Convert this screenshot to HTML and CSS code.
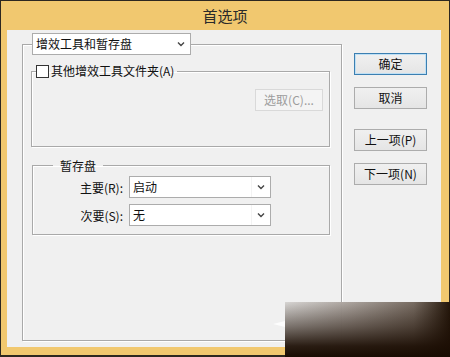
FILE: index.html
```html
<!DOCTYPE html>
<html lang="zh-CN">
<head>
    <meta charset="UTF-8">
    <title>首选项</title>
    <link rel="stylesheet" href="styles.css">
</head>
<body>
    <div class="window">
        <div class="titlebar">首选项</div>
        <div class="client">
            <fieldset class="group main-group">
                <legend class="combo combo-main">
                    <span class="combo-text">增效工具和暂存盘</span>
                    <svg class="chevron" width="8" height="6" viewBox="0 0 8 6"><path d="M1 1.5 L4 4.5 L7 1.5" fill="none" stroke="#444" stroke-width="1.4"/></svg>
                </legend>

                <fieldset class="group plugin-group">
                    <legend class="check-legend">
                        <span class="checkbox"></span>
                        <span>其他增效工具文件夹(A)</span>
                    </legend>
                    <div class="pick-row">
                        <button class="btn btn-disabled">选取(C)...</button>
                    </div>
                </fieldset>

                <fieldset class="group scratch-group">
                    <legend class="text-legend">暂存盘</legend>
                    <div class="scratch-grid">
                        <label>主要(R):</label>
                        <div class="combo combo-row">
                            <span class="combo-text">启动</span>
                            <span class="combo-btn">
                                <svg width="8" height="6" viewBox="0 0 8 6"><path d="M1 1.5 L4 4.5 L7 1.5" fill="none" stroke="#444" stroke-width="1.4"/></svg>
                            </span>
                        </div>
                        <label>次要(S):</label>
                        <div class="combo combo-row">
                            <span class="combo-text">无</span>
                            <span class="combo-btn">
                                <svg width="8" height="6" viewBox="0 0 8 6"><path d="M1 1.5 L4 4.5 L7 1.5" fill="none" stroke="#444" stroke-width="1.4"/></svg>
                            </span>
                        </div>
                    </div>
                </fieldset>
            </fieldset>

            <div class="buttons">
                <button class="btn btn-default">确定</button>
                <button class="btn">取消</button>
                <button class="btn btn-sep">上一项(P)</button>
                <button class="btn">下一项(N)</button>
            </div>
        </div>
    </div>

    <!-- watermark in the corner of the screenshot -->
    <div class="watermark"></div>
    <div class="wm-arrow"></div>
</body>
</html>
```

FILE: styles.css
```css
* {
    margin: 0;
    padding: 0;
    box-sizing: border-box;
}

body {
    position: relative;
    font-family: "Noto Sans CJK SC", "Liberation Sans", sans-serif;
    font-size: 12px;
    color: #111;
    background: #f1c86f;
    width: 450px;
    height: 357px;
    overflow: hidden;
}

.window {
    width: 450px;
    height: 357px;
    border: 1px solid #2d2820;
    border-bottom-width: 2px;
    background: #f1c86f;
}

.titlebar {
    height: 29px;
    line-height: 29px;
    text-align: center;
    font-size: 15px;
    color: #2a2a2a;
}

.client {
    display: flex;
    align-items: flex-start;
    margin: 0 8px 0 6px;
    height: 317px;
    padding: 3px 0 0 15px;
    background: #f0f0f0;
}

.group {
    border: 1px solid #a9a9a9;
    box-shadow: 1px 1px 0 #fff, inset 1px 1px 0 #fff;
    min-inline-size: 0;
}

.main-group {
    width: 320px;
    height: 308px;
    padding: 0 11px 0 9px;
}

.combo {
    display: flex;
    align-items: center;
    height: 22px;
    background: #fff;
    border: 1px solid #acacac;
    line-height: 20px;
}

.combo-text {
    flex: 1;
    padding-left: 3px;
}

.combo-main {
    width: 159px;
    padding: 0 5px 0 0;
}

.chevron {
    display: block;
}

.plugin-group {
    margin: 8px 0 0 -1px;
    width: 299px;
    height: 84px;
    padding: 0 6px 0 4px;
}

.check-legend {
    display: flex;
    align-items: center;
    height: 16px;
    padding: 0 3px 0 0;
    line-height: 16px;
}

.checkbox {
    width: 13px;
    height: 13px;
    margin-right: 2px;
    background: #fff;
    border: 1px solid #333;
}

.pick-row {
    display: flex;
    justify-content: flex-end;
    padding-top: 10px;
}

.scratch-group {
    margin-top: 10px;
    width: 298px;
    height: 78px;
    padding: 0 0 0 20px;
}

.text-legend {
    height: 17px;
    line-height: 17px;
    padding: 0 7px;
}

.scratch-grid {
    display: grid;
    grid-template-columns: 70px 142px;
    column-gap: 6px;
    row-gap: 6px;
    align-items: center;
    padding-top: 2px;
}

.scratch-grid label {
    text-align: right;
}

.combo-row {
    width: 142px;
}

.combo-btn {
    display: flex;
    align-items: center;
    justify-content: center;
    width: 19px;
    height: 20px;
    border-left: 1px solid #f3f3f3;
}

.buttons {
    display: flex;
    flex-direction: column;
    gap: 12px;
    margin-left: 12px;
    padding-top: 20px;
}

.btn {
    width: 73px;
    height: 22px;
    font-family: inherit;
    font-size: 12px;
    line-height: 20px;
    color: #111;
    background: linear-gradient(#f0f0f0, #e5e5e5);
    border: 1px solid #acacac;
}

.btn-default {
    border-color: #3c7fb1;
    box-shadow: inset 0 0 0 1px #bfe0f5;
}

.btn-sep {
    margin-top: 8px;
}

.btn-disabled {
    width: 68px;
    color: #9c9c9c;
    background: #f4f4f4;
    border-color: #d9d9d9;
}

.watermark {
    position: absolute;
    left: 285px;
    top: 302px;
    width: 165px;
    height: 55px;
    background:
        linear-gradient(to bottom, rgba(30, 16, 6, 0) 0%, rgba(30, 16, 6, 0.5) 45%, rgba(28, 14, 4, 0.92) 80%, rgba(24, 12, 2, 1) 100%),
        linear-gradient(to right, rgba(214, 212, 210, 0.96) 0%, rgba(168, 160, 154, 0.97) 40%, rgba(118, 106, 96, 0.98) 78%, rgba(36, 22, 10, 1) 100%);
}

.wm-arrow {
    position: absolute;
    left: 273px;
    top: 321px;
    border-top: 3px solid transparent;
    border-bottom: 3px solid transparent;
    border-right: 12px solid rgba(255, 255, 255, 0.85);
}
```
